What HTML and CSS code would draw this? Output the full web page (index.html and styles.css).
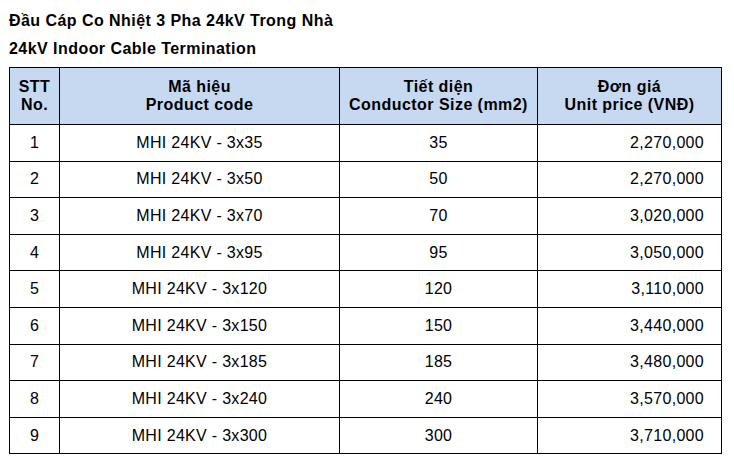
FILE: index.html
```html
<!DOCTYPE html>
<html lang="vi">
<head>
<meta charset="utf-8">
<link rel="stylesheet" href="styles.css">
</head>
<body>
<div class="page">
  <div class="title">Đầu Cáp Co Nhiệt 3 Pha 24kV Trong Nhà</div>
  <div class="title">24kV Indoor Cable Termination</div>
  <table class="price-table">
    <colgroup>
      <col class="c1"><col class="c2"><col class="c3"><col class="c4">
    </colgroup>
    <thead>
      <tr>
        <th>STT<br>No.</th>
        <th>Mã hiệu<br>Product code</th>
        <th>Tiết diện<br>Conductor Size (mm2)</th>
        <th>Đơn giá<br>Unit price (VNĐ)</th>
      </tr>
    </thead>
    <tbody>
      <tr><td>1</td><td>MHI 24KV - 3x35</td><td>35</td><td class="price">2,270,000</td></tr>
      <tr><td>2</td><td>MHI 24KV - 3x50</td><td>50</td><td class="price">2,270,000</td></tr>
      <tr><td>3</td><td>MHI 24KV - 3x70</td><td>70</td><td class="price">3,020,000</td></tr>
      <tr><td>4</td><td>MHI 24KV - 3x95</td><td>95</td><td class="price">3,050,000</td></tr>
      <tr><td>5</td><td>MHI 24KV - 3x120</td><td>120</td><td class="price">3,110,000</td></tr>
      <tr><td>6</td><td>MHI 24KV - 3x150</td><td>150</td><td class="price">3,440,000</td></tr>
      <tr><td>7</td><td>MHI 24KV - 3x185</td><td>185</td><td class="price">3,480,000</td></tr>
      <tr><td>8</td><td>MHI 24KV - 3x240</td><td>240</td><td class="price">3,570,000</td></tr>
      <tr><td>9</td><td>MHI 24KV - 3x300</td><td>300</td><td class="price">3,710,000</td></tr>
    </tbody>
  </table>
</div>
</body>
</html>
```

FILE: styles.css
```css
html, body {
  margin: 0;
  padding: 0;
  background: #ffffff;
}

body {
  font-family: "Liberation Sans", Arial, sans-serif;
  font-size: 16px;
  color: #000000;
  letter-spacing: 0.3px;
}

.page {
  padding: 7px 0 0 9px;
}

.title {
  font-weight: bold;
  line-height: 28px;
  letter-spacing: 0.45px;
}

.price-table {
  margin-top: 4px;
  border-collapse: collapse;
  table-layout: fixed;
  width: 712px;
}

.c1 { width: 50px; }
.c2 { width: 280px; }
.c3 { width: 198px; }
.c4 { width: 184px; }

.price-table th,
.price-table td {
  border: 1px solid #000000;
  padding: 0;
  text-align: center;
  vertical-align: middle;
}

.price-table th {
  background: #c6d9f1;
  font-weight: bold;
  line-height: 18.4px;
  height: 56px;
  letter-spacing: 0.45px;
}

.price-table td {
  height: 35.6px;
  line-height: 18px;
}

.price-table td.price {
  text-align: right;
  padding-right: 17px;
}
```
